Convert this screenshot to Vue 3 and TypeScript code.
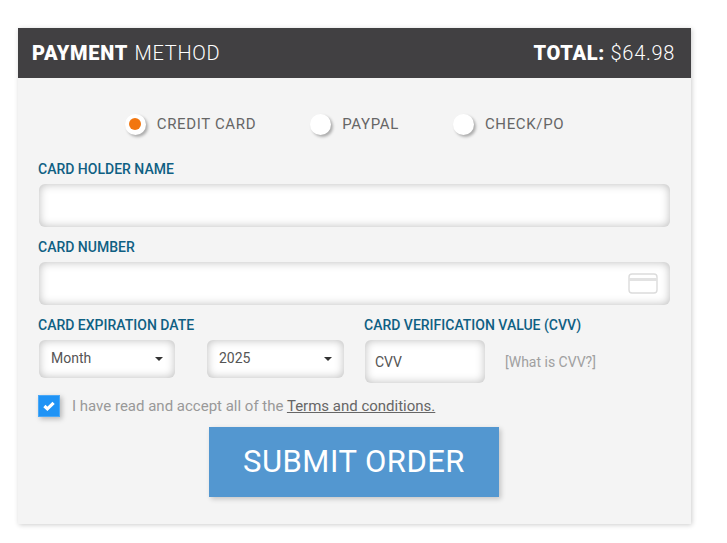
<script setup lang="ts">
import { ref } from 'vue'

const methods = ['CREDIT CARD', 'PAYPAL', 'CHECK/PO']
const selected = ref('CREDIT CARD')
const accepted = ref(true)
</script>

<template>
  <div class="page">
    <form class="payment" @submit.prevent>
      <header class="payment__head">
        <h1 class="payment__title"><b>PAYMENT</b> METHOD</h1>
        <div class="payment__total"><b>TOTAL:</b> $64.98</div>
      </header>

      <div class="payment__body">
        <div class="methods">
          <label v-for="method in methods" :key="method" class="method" @click="selected = method">
            <span class="method__radio">
              <span v-if="selected === method" class="method__dot"></span>
            </span>
            {{ method }}
          </label>
        </div>

        <label class="label">CARD HOLDER NAME</label>
        <input class="field field--wide" type="text" />

        <label class="label label--next">CARD NUMBER</label>
        <div class="card-number">
          <input class="field field--wide" type="text" />
          <svg class="card-number__icon" width="30" height="21" viewBox="0 0 30 21" fill="none">
            <rect x="1" y="1" width="28" height="19" rx="3" stroke="#dcdcdc" stroke-width="1.4" />
            <rect x="1" y="5" width="28" height="3" fill="#e2e2e2" />
          </svg>
        </div>

        <div class="row">
          <div class="col-date">
            <label class="label">CARD EXPIRATION DATE</label>
            <div class="selects">
              <div class="select"><span class="select__text">Month</span><span class="select__caret"></span></div>
              <div class="select select--year"><span class="select__text">2025</span><span class="select__caret"></span></div>
            </div>
          </div>
          <div class="col-cvv">
            <label class="label">CARD VERIFICATION VALUE (CVV)</label>
            <div class="cvv">
              <input class="field field--cvv" type="text" placeholder="CVV" />
              <span class="cvv__help">[What is CVV?]</span>
            </div>
          </div>
        </div>

        <div class="terms">
          <span class="terms__box" @click="accepted = !accepted">
            <svg v-if="accepted" width="12" height="10" viewBox="0 0 12 10">
              <path d="M1.4 5 4.4 7.8 10.6 1.8" fill="none" stroke="#fff" stroke-width="3.2" />
            </svg>
          </span>
          <span>I have read and accept all of the <a class="terms__link" href="#">Terms and conditions.</a></span>
        </div>

        <button class="submit" type="submit">SUBMIT ORDER</button>
      </div>
    </form>
  </div>
</template>

<style>
html, body {
  margin: 0;
  background: #fff;
}
</style>

<style scoped>
.page {
  padding: 28px 36px 19px 18px;
  font-family: Roboto, "Liberation Sans", sans-serif;
}

.payment {
  width: 673px;
  background: #f4f4f4;
  box-shadow: 1px 1px 5px rgba(0, 0, 0, 0.2);
}

.payment__head {
  height: 50px;
  padding: 0 16px 0 14px;
  box-sizing: border-box;
  display: flex;
  justify-content: space-between;
  align-items: center;
  background: #414042;
  color: #fff;
  font-size: 20px;
  font-weight: 300;
}

.payment__title {
  margin: 0;
  font-size: 20px;
  font-weight: 300;
  letter-spacing: 0.7px;
  word-spacing: 1px;
}

.payment__title b,
.payment__total b {
  font-weight: 900;
}

.payment__total {
  letter-spacing: 0.7px;
}

.payment__body {
  padding: 36px 20px 27px;
}

.methods {
  display: flex;
  justify-content: center;
  gap: 54px;
  margin-bottom: 27px;
  padding-right: 20px;
  height: 20px;
}

.method {
  display: flex;
  align-items: center;
  gap: 11px;
  font-size: 15px;
  letter-spacing: 0.65px;
  color: #666;
}

.method__radio {
  width: 21px;
  height: 21px;
  border-radius: 50%;
  background: #fff;
  box-shadow: 2px 2px 3px rgba(0, 0, 0, 0.3);
  display: flex;
  align-items: center;
  justify-content: center;
}

.method__dot {
  width: 12px;
  height: 12px;
  border-radius: 50%;
  background: #f2760f;
}

.label {
  display: block;
  height: 16px;
  line-height: 16px;
  margin-bottom: 7px;
  font-size: 14px;
  font-weight: 500;
  color: #0f6083;
}

.label--next {
  margin-top: 12px;
}

.field {
  display: block;
  box-sizing: border-box;
  height: 43px;
  padding: 0 10px;
  border: 0;
  border-radius: 6px;
  outline: 0;
  background: #fff;
  box-shadow: inset 0 0 10px rgba(0, 0, 0, 0.27);
  font: 14px Roboto, sans-serif;
  color: #555;
}

.field--wide {
  width: 631px;
  margin-left: 1px;
}

.field--cvv {
  width: 120px;
  margin-left: 1px;
}

.field--cvv::placeholder {
  color: #555;
  opacity: 1;
}

.card-number {
  display: flex;
  align-items: center;
}

.card-number__icon {
  margin-left: -42px;
}

.row {
  display: flex;
  margin-top: 12px;
}

.col-date {
  width: 326px;
}

.selects {
  display: flex;
  gap: 32px;
  margin-left: 1px;
}

.select {
  width: 136px;
  height: 38px;
  box-sizing: border-box;
  padding: 0 12px;
  display: flex;
  align-items: center;
  justify-content: space-between;
  border-radius: 6px;
  background: #fff;
  box-shadow: inset 0 0 10px rgba(0, 0, 0, 0.27);
  font-size: 14px;
  color: #555;
}

.select--year {
  width: 137px;
}

.select__text {
  margin-top: -2px;
}

.select__caret {
  width: 0;
  height: 0;
  border-left: 4px solid transparent;
  border-right: 4px solid transparent;
  border-top: 4px solid #333;
}

.cvv {
  display: flex;
  align-items: center;
  gap: 20px;
}

.cvv__help {
  font-size: 14px;
  color: #a0a0a0;
}

.terms {
  display: flex;
  align-items: center;
  gap: 12px;
  margin-top: 12px;
  height: 22px;
  font-size: 15px;
  color: #999;
}

.terms__box {
  width: 22px;
  height: 22px;
  box-sizing: border-box;
  display: flex;
  align-items: center;
  justify-content: center;
  background: #1f93f5;
  border: 1px solid #4aa8f7;
  box-shadow: 2px 2px 5px rgba(0, 0, 0, 0.25);
}

.terms__link {
  color: #666;
  text-decoration: underline;
}

.submit {
  display: block;
  width: 290px;
  height: 70px;
  margin: 10px 0 0 171px;
  padding: 0 0 2px;
  border: 0;
  background: #5397d0;
  box-shadow: 2px 2px 5px rgba(0, 0, 0, 0.2);
  color: #fff;
  font-family: Roboto, sans-serif;
  font-size: 31px;
  letter-spacing: 0.5px;
}
</style>
